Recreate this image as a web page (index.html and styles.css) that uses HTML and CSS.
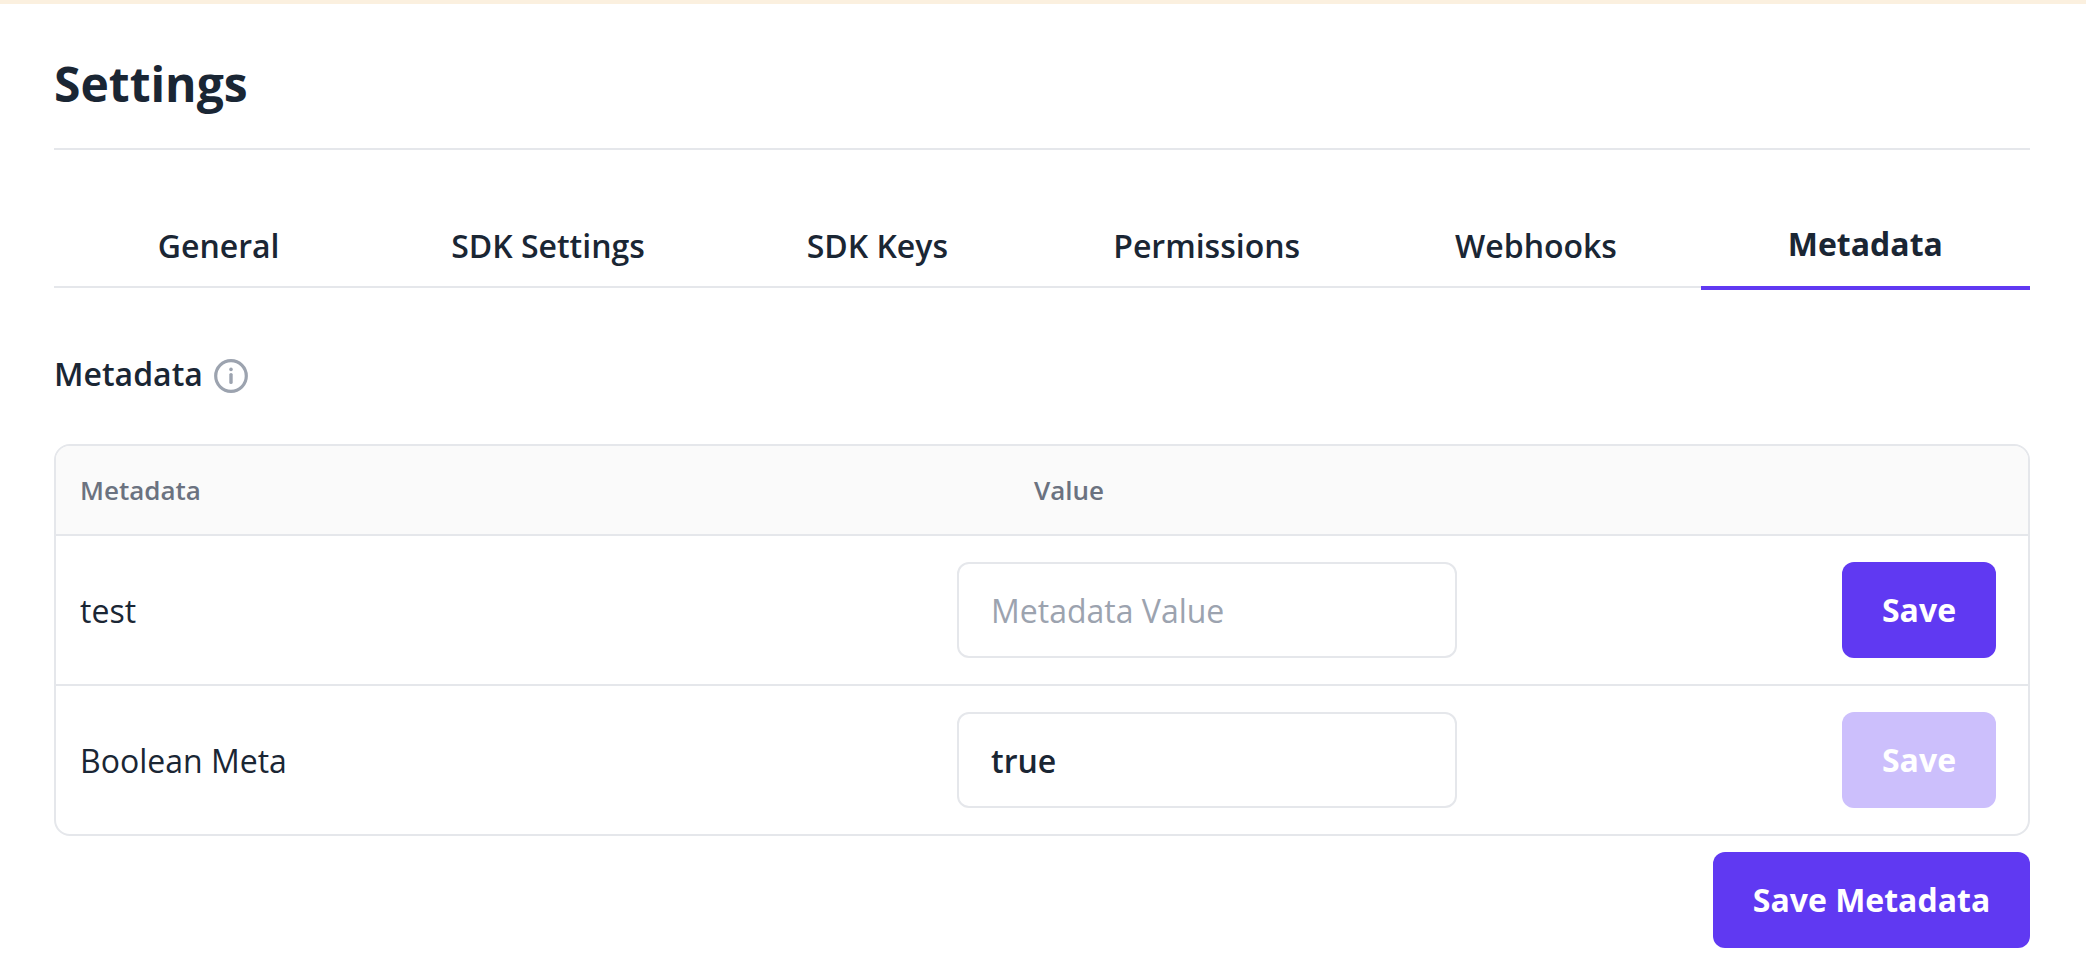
FILE: index.html
```html
<!DOCTYPE html>
<html lang="en">
<head>
<meta charset="utf-8">
<title>Settings</title>
<link rel="stylesheet" href="styles.css">
</head>
<body>
<div class="banner"></div>
<main class="page">
  <h1 class="title">Settings</h1>
  <nav class="tabs">
    <a class="tab">General</a>
    <a class="tab">SDK Settings</a>
    <a class="tab">SDK Keys</a>
    <a class="tab">Permissions</a>
    <a class="tab">Webhooks</a>
    <a class="tab tab-active">Metadata</a>
  </nav>
  <h2 class="section-title">
    <span>Metadata</span>
    <svg class="info" width="34" height="34" viewBox="0 0 34 34" fill="none">
      <circle cx="17" cy="17" r="15.3" stroke="#9ca3af" stroke-width="3.2"/>
      <circle cx="17" cy="10.4" r="1.8" fill="#9ca3af"/>
      <path d="M17 15.6V23.4" stroke="#9ca3af" stroke-width="3.4" stroke-linecap="round"/>
    </svg>
  </h2>
  <section class="table">
    <div class="head">
      <span class="head-name">Metadata</span>
      <span class="head-value">Value</span>
    </div>
    <div class="row">
      <span class="name">test</span>
      <input class="input" placeholder="Metadata Value">
      <button class="button button-row">Save</button>
    </div>
    <div class="row">
      <span class="name">Boolean Meta</span>
      <input class="input" value="true">
      <button class="button button-row button-disabled">Save</button>
    </div>
  </section>
  <div class="footer">
    <button class="button button-main">Save Metadata</button>
  </div>
</main>
</body>
</html>
```
FILE: styles.css
```css
* {
  box-sizing: border-box;
}

body {
  margin: 0;
  background: #fff;
  color: #1a2634;
  font-family: "Open Sans", sans-serif;
  font-size: 32px;
  line-height: 44px;
}

.banner {
  height: 4px;
  background: #fbf0df;
}

.page {
  padding: 0 56px 0 54px;
}

.title {
  height: 146px;
  margin: 0;
  padding-top: 46px;
  border-bottom: 2px solid #e5e7eb;
  font-size: 48px;
  font-weight: 700;
  line-height: 68px;
}

.tabs {
  display: grid;
  grid-template-columns: repeat(6, 1fr);
  margin-top: 60px;
}

.tab {
  height: 78px;
  padding-top: 14px;
  border-bottom: 2px solid #e5e7eb;
  font-weight: 600;
  text-align: center;
}

.tab-active {
  height: 80px;
  padding-top: 12px;
  border-bottom: 4px solid #6039f2;
  font-weight: 700;
}

.section-title {
  display: flex;
  align-items: center;
  gap: 11px;
  height: 44px;
  margin: 62px 0 48px;
  font-size: 32px;
  font-weight: 600;
}

.info {
  margin-top: 4px;
}

.table {
  overflow: hidden;
  border: 2px solid #e5e7eb;
  border-radius: 16px;
}

.head,
.row {
  display: grid;
  grid-template-columns: 901px 500px 1fr;
  align-items: center;
}

.head {
  height: 88px;
  background: #fafafa;
  color: #6b7280;
  font-size: 26px;
  font-weight: 600;
}

.head-name,
.name {
  padding-left: 24px;
}

.name {
  padding-top: 2px;
}

.head-value {
  padding-left: 77px;
}

.row {
  height: 150px;
  border-top: 2px solid #e5e7eb;
}

.input {
  width: 100%;
  height: 96px;
  padding: 0 32px;
  border: 2px solid #e5e7eb;
  border-radius: 12px;
  outline: none;
  background: #fff;
  color: #1a2634;
  font: 600 32px/44px "Open Sans", sans-serif;
}

.input::placeholder {
  color: #9ca3af;
  font-weight: 400;
  opacity: 1;
}

.button {
  height: 96px;
  padding: 0;
  border: 0;
  border-radius: 12px;
  background: #6039f2;
  color: #fff;
  font: 700 32px/44px "Open Sans", sans-serif;
}

.button-row {
  width: 154px;
  margin-right: 32px;
  justify-self: end;
}

.button-disabled {
  background: #ccbffc;
}

.button-main {
  width: 317px;
}

.footer {
  display: flex;
  justify-content: flex-end;
  margin-top: 16px;
}
```
